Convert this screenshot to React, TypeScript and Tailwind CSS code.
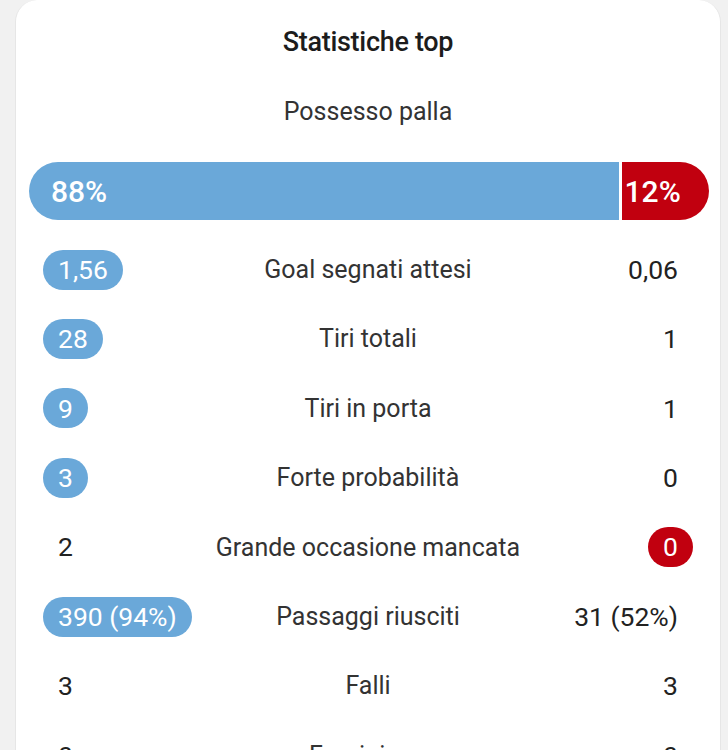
const rows: { home: string; label: string; away: string; hi?: 'home' | 'away' }[] = [
  { home: '1,56', label: 'Goal segnati attesi', away: '0,06', hi: 'home' },
  { home: '28', label: 'Tiri totali', away: '1', hi: 'home' },
  { home: '9', label: 'Tiri in porta', away: '1', hi: 'home' },
  { home: '3', label: 'Forte probabilità', away: '0', hi: 'home' },
  { home: '2', label: 'Grande occasione mancata', away: '0', hi: 'away' },
  { home: '390 (94%)', label: 'Passaggi riusciti', away: '31 (52%)', hi: 'home' },
  { home: '3', label: 'Falli', away: '3' },
  { home: '0', label: 'Fuorigioco', away: '0' },
]

function Value({ text, active, color }: { text: string; active: boolean; color: string }) {
  return (
    <span
      className={
        'inline-flex h-[40px] min-w-[44px] items-center justify-center rounded-full px-[15px] text-[26.5px] ' +
        (active ? color + ' text-white' : 'text-[#222]')
      }
    >
      {text}
    </span>
  )
}

export default function App() {
  return (
    <div
      className="h-screen overflow-hidden bg-[#f1f1f1] px-[15px] pr-[7px]"
      style={{ fontFamily: 'Roboto, "Noto Sans", sans-serif' }}
    >
      <div className="min-h-screen rounded-t-[22px] bg-white border-x border-[#e6e6e6]">
        <h2 className="pt-[26px] text-center text-[27px] leading-[32px] font-medium text-[#1c1c1c] tracking-[-0.3px]">
          Statistiche top
        </h2>
        <p className="mt-[39px] text-center text-[25px] leading-[30px] text-[#333]">Possesso palla</p>

        <div className="ml-[13px] mr-[11px] mt-[35px] flex h-[58px] gap-[3px] text-[30px] font-medium text-white">
          <div className="flex basis-[86.7%] items-center rounded-l-full bg-[#6aa8d9] pl-[22px]">88%</div>
          <div className="flex flex-1 items-center rounded-r-full bg-[#c1000f] pl-[3px]">12%</div>
        </div>

        <div className="mt-[15px] px-[27px] text-[25px] text-[#222]">
          {rows.map((r) => (
            <div key={r.label} className="grid h-[69.4px] grid-cols-[1fr_auto_1fr] items-center">
              <div className="flex justify-start">
                <Value text={r.home} active={r.hi === 'home'} color="bg-[#6aa8d9]" />
              </div>
              <div className="text-center text-[#333]">{r.label}</div>
              <div className="flex justify-end">
                <Value text={r.away} active={r.hi === 'away'} color="bg-[#c1000f]" />
              </div>
            </div>
          ))}
        </div>
      </div>
    </div>
  )
}
